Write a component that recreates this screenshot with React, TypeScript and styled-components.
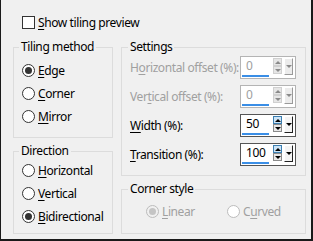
import React from "react";
import styled, { createGlobalStyle } from "styled-components";

const GlobalStyle = createGlobalStyle`
  html, body {
    margin: 0;
    padding: 0;
    background: #f0f0f0;
  }
  body {
    font-family: "Noto Sans", "Open Sans", sans-serif;
    font-size: 12px;
    letter-spacing: -0.4px;
    color: #000;
  }
`;

const Frame = styled.div`
  width: 313px;
  height: 241px;
  box-sizing: border-box;
  background: #f0f0f0;
  border-left: 1px solid #1a1a1a;
  border-right: 2px solid #1a1a1a;
  border-bottom: 2px solid #1a1a1a;
  padding: 16px 5px 5px 12px;
`;

const CheckRow = styled.label`
  display: flex;
  align-items: center;
  height: 13px;
  margin: 0 0 10px 9px;
  gap: 3px;
  line-height: 13px;
`;

const CheckBox = styled.span`
  width: 13px;
  height: 13px;
  box-sizing: border-box;
  border: 1px solid #333;
  background: #fff;
`;

const Columns = styled.div`
  display: grid;
  grid-template-columns: 100px 185px;
  column-gap: 8px;
`;

const Column = styled.div`
  display: flex;
  flex-direction: column;
  gap: 5px;
`;

const Group = styled.fieldset<{ $h: number }>`
  margin: 0;
  min-width: 0;
  box-sizing: border-box;
  height: ${(p) => p.$h}px;
  border: 1px solid #dcdcdc;
  padding: 0;
`;

const Legend = styled.legend<{ $x: number }>`
  padding: 0 2px;
  margin-left: ${(p) => p.$x}px;
  line-height: 16px;
  height: 16px;
`;

const Body = styled.div<{ $pad: string }>`
  padding: ${(p) => p.$pad};
`;

const Mn = styled.u`
  text-decoration: underline;
  text-underline-offset: 2px;
  text-decoration-thickness: 1px;
`;

const RadioRow = styled.label<{ $w?: number; $off?: boolean }>`
  display: flex;
  align-items: center;
  height: 23px;
  gap: 3px;
  width: ${(p) => (p.$w ? `${p.$w}px` : "auto")};
  color: ${(p) => (p.$off ? "#a0a0a0" : "#000")};
`;

const Circle = styled.span<{ $on?: boolean; $off?: boolean }>`
  width: 13px;
  height: 13px;
  flex: none;
  box-sizing: border-box;
  border-radius: 50%;
  border: 1px solid ${(p) => (p.$off ? "#bcbcbc" : "#333")};
  background: ${(p) => (p.$off && p.$on ? "#f0f0f0" : "#fff")};
  display: flex;
  align-items: center;
  justify-content: center;
  &::after {
    content: "";
    display: ${(p) => (p.$on ? "block" : "none")};
    width: 7px;
    height: 7px;
    border-radius: 50%;
    background: ${(p) => (p.$off ? "#c4c4c4" : "#333")};
  }
`;

const InlineRow = styled.div`
  display: flex;
`;

const FieldRow = styled.div<{ $off?: boolean }>`
  display: flex;
  align-items: center;
  justify-content: space-between;
  height: 23px;
  margin-bottom: 6px;
  white-space: nowrap;
  color: ${(p) => (p.$off ? "#a0a0a0" : "#000")};
`;

const Spin = styled.div<{ $off?: boolean }>`
  width: 56px;
  height: 23px;
  flex: none;
  box-sizing: border-box;
  border: 1px solid ${(p) => (p.$off ? "#b4b4b4" : "#555")};
  background: #fff;
  display: flex;
  align-items: flex-start;
`;

const ValueArea = styled.div`
  width: 27px;
  height: 21px;
  margin-left: 1px;
  display: flex;
  flex-direction: column;
  justify-content: space-between;
`;

const ValueText = styled.span<{ $off?: boolean }>`
  padding: 1px 0 0 4px;
  line-height: 16px;
  color: ${(p) => (p.$off ? "#a0a0a0" : "#000")};
`;

const Bar = styled.span`
  height: 2px;
  background: #3a8ee6;
  margin-bottom: 1px;
`;

const Arrows = styled.div`
  display: flex;
  flex-direction: column;
  margin: 1px 0 0 4px;
`;

const ArrowBtn = styled.span<{ $hot?: boolean; $off?: boolean }>`
  width: 9px;
  height: 8px;
  box-sizing: border-box;
  border: 1px solid
    ${(p) => (p.$off ? "#d0d0d0" : p.$hot ? "#3c7fb1" : "#8a8a8a")};
  background: ${(p) => (p.$off ? "#e6e6e6" : p.$hot ? "#cce4f7" : "#e8e8e8")};
  display: flex;
  align-items: center;
  justify-content: center;
`;

const Tri = styled.span<{ $down?: boolean; $off?: boolean }>`
  width: 0;
  height: 0;
  border-left: 3px solid transparent;
  border-right: 3px solid transparent;
  ${(p) =>
    p.$down
      ? `border-top: 3px solid ${p.$off ? "#8a8a8a" : "#000"};`
      : `border-bottom: 3px solid ${p.$off ? "#8a8a8a" : "#000"};`}
`;

const DropBtn = styled.span<{ $off?: boolean }>`
  width: 9px;
  height: 17px;
  margin: 1px 0 0 2px;
  box-sizing: border-box;
  background: ${(p) => (p.$off ? "#ececec" : "#f4f4f4")};
  border-top: 1px solid #fff;
  border-left: 1px solid #fff;
  border-right: 1px solid ${(p) => (p.$off ? "#9a9a9a" : "#222")};
  border-bottom: 1px solid ${(p) => (p.$off ? "#9a9a9a" : "#222")};
  display: flex;
  align-items: center;
  justify-content: center;
`;

type Field = { pre: string; key: string; post: string; value: string; off?: boolean };

const fields: Field[] = [
  { pre: "H", key: "o", post: "rizontal offset (%):", value: "0", off: true },
  { pre: "Ver", key: "t", post: "ical offset (%):", value: "0", off: true },
  { pre: "", key: "W", post: "idth (%):", value: "50" },
  { pre: "", key: "T", post: "ransition (%):", value: "100" },
];

const Radio = ({
  label,
  keyAt = 0,
  on,
  off,
  w,
}: {
  label: string;
  keyAt?: number;
  on?: boolean;
  off?: boolean;
  w?: number;
}) => (
  <RadioRow $off={off} $w={w}>
    <Circle $on={on} $off={off} />
    <span>
      {label.slice(0, keyAt)}
      <Mn>{label[keyAt]}</Mn>
      {label.slice(keyAt + 1)}
    </span>
  </RadioRow>
);

const SpinField = ({ f }: { f: Field }) => (
  <FieldRow $off={f.off}>
    <span>
      {f.pre}
      <Mn>{f.key}</Mn>
      {f.post}
    </span>
    <Spin $off={f.off}>
      <ValueArea>
        <ValueText $off={f.off}>{f.value}</ValueText>
        <Bar />
      </ValueArea>
      <Arrows>
        <ArrowBtn $hot={!f.off} $off={f.off}>
          <Tri $off={f.off} />
        </ArrowBtn>
        <ArrowBtn $off={f.off}>
          <Tri $down $off={f.off} />
        </ArrowBtn>
      </Arrows>
      <DropBtn $off={f.off}>
        <Tri $down $off={f.off} />
      </DropBtn>
    </Spin>
  </FieldRow>
);

export default function App() {
  return (
    <Frame>
      <GlobalStyle />
      <CheckRow>
        <CheckBox />
        <span>
          <Mn>S</Mn>how tiling preview
        </span>
      </CheckRow>
      <Columns>
        <Column>
          <Group $h={99}>
            <Legend $x={5}>Tiling method</Legend>
            <Body $pad="4px 0 0 8px">
              <Radio label="Edge" on />
              <Radio label="Corner" />
              <Radio label="Mirror" />
            </Body>
          </Group>
          <Group $h={91}>
            <Legend $x={5}>Direction</Legend>
            <Body $pad="0 0 0 8px">
              <Radio label="Horizontal" />
              <Radio label="Vertical" />
              <Radio label="Bidirectional" on />
            </Body>
          </Group>
        </Column>
        <Column>
          <Group $h={137}>
            <Legend $x={6}>Settings</Legend>
            <Body $pad="1px 9px 0 8px">
              {fields.map((f) => (
                <SpinField key={f.post} f={f} />
              ))}
            </Body>
          </Group>
          <Group $h={53}>
            <Legend $x={6}>Corner style</Legend>
            <Body $pad="3px 0 0 24px">
              <InlineRow>
                <Radio label="Linear" on off w={81} />
                <Radio label="Curved" keyAt={1} off />
              </InlineRow>
            </Body>
          </Group>
        </Column>
      </Columns>
    </Frame>
  );
}
